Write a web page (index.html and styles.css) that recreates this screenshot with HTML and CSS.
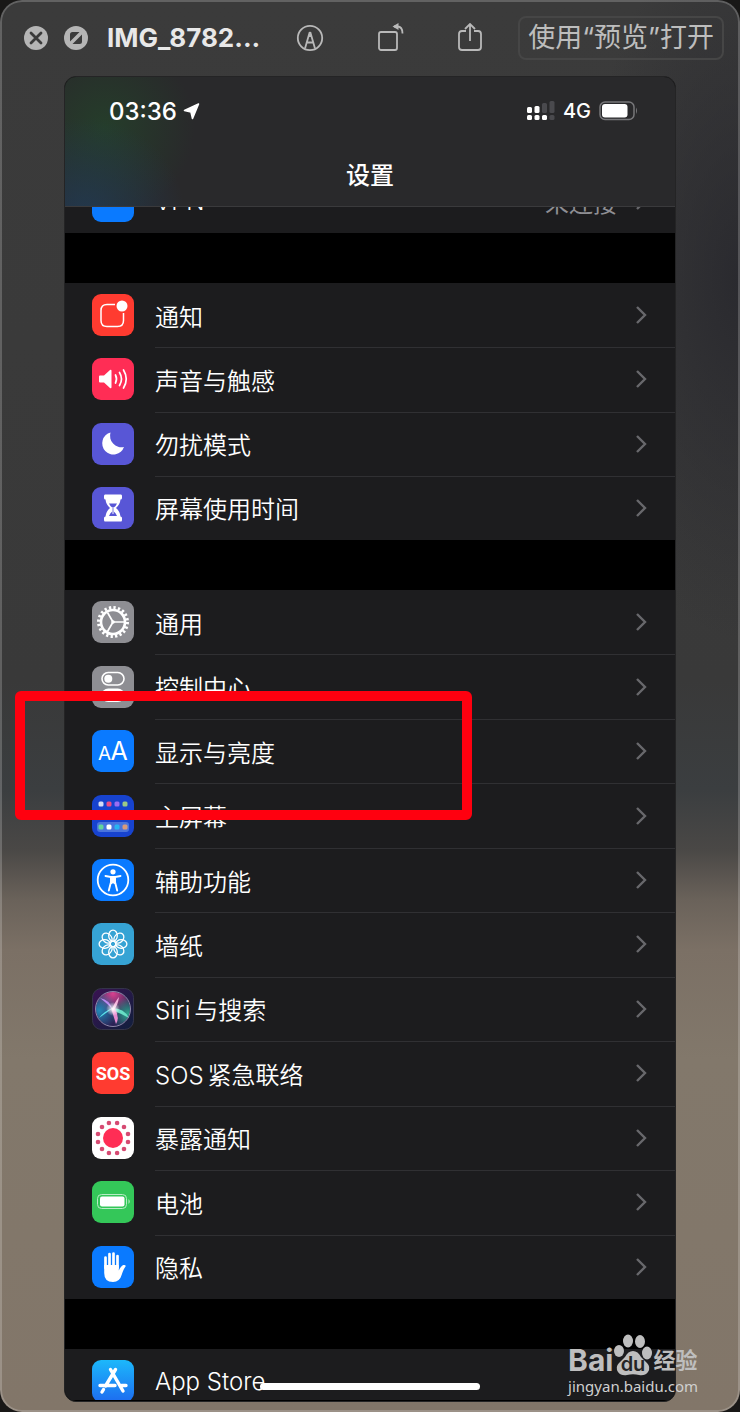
FILE: index.html
```
<!DOCTYPE html>
<html lang="zh-CN">
  <head>
    <meta charset="utf-8" />
    <title>IMG_8782</title>
    <link rel="stylesheet" href="styles.css" />
  </head>
  <body>
    <svg width="0" height="0" class="defs">
      <defs>
        <symbol id="chevron" viewBox="0 0 12 20">
          <path d="M2 2l8 8-8 8" fill="none" stroke="#68686c" stroke-width="2.4" />
        </symbol>
        <linearGradient id="storeBg" x1="0" y1="0" x2="0" y2="1">
          <stop offset="0" stop-color="#1cb8fb" />
          <stop offset="1" stop-color="#1d6cf0" />
        </linearGradient>
        <linearGradient id="siriBg" x1="0" y1="0" x2="1" y2="1">
          <stop offset="0" stop-color="#3a1252" />
          <stop offset="1" stop-color="#101f3c" />
        </linearGradient>
        <radialGradient id="siriPink" cx=".5" cy=".05" r=".6">
          <stop offset="0" stop-color="#d8418f" />
          <stop offset="1" stop-color="#d8418f" stop-opacity="0" />
        </radialGradient>
        <radialGradient id="siriTeal" cx=".1" cy=".55" r=".55">
          <stop offset="0" stop-color="#2389b8" />
          <stop offset="1" stop-color="#2389b8" stop-opacity="0" />
        </radialGradient>
        <radialGradient id="siriGreen" cx=".95" cy=".65" r=".5">
          <stop offset="0" stop-color="#2ca78d" />
          <stop offset="1" stop-color="#2ca78d" stop-opacity="0" />
        </radialGradient>
        <radialGradient id="siriGlow">
          <stop offset="0" stop-color="#fff" />
          <stop offset="1" stop-color="#fff" stop-opacity="0" />
        </radialGradient>
      </defs>
    </svg>

    <div class="window">
      <div class="titlebar">
        <button class="round-btn" aria-label="关闭">
          <svg width="24" height="24" viewBox="0 0 24 24">
            <circle cx="12" cy="12" r="12" fill="#b5b5b5" />
            <path d="M7 7l10 10M17 7L7 17" stroke="#3b3b3b" stroke-width="2.8" stroke-linecap="round" />
          </svg>
        </button>
        <button class="round-btn" aria-label="全屏">
          <svg width="24" height="24" viewBox="0 0 24 24">
            <circle cx="12" cy="12" r="12" fill="#b5b5b5" />
            <path d="M6 15.5V8.500Q6 6 8.500 6H15.500zM18 8.500V15.500Q18 18 15.500 18H8.500z" fill="#3b3b3b" />
          </svg>
        </button>
        <h1 class="filename">IMG_8782...</h1>
        <div class="tools">
          <button class="tool" aria-label="标记">
            <svg width="28" height="28" viewBox="0 0 28 28" fill="none" stroke="#b9b9b9" stroke-width="1.8">
              <circle cx="14" cy="14" r="12.200" />
              <path d="M9 24.500L13.500 9h1L19 24.500M10.700 18.500h6.600" />
              <path d="M12 13l2-6 2 6z" fill="#b9b9b9" stroke="none" />
            </svg>
          </button>
          <button class="tool" aria-label="旋转">
            <svg width="28" height="30" viewBox="0 0 28 30" fill="none" stroke="#b9b9b9" stroke-width="1.800">
              <rect x="2" y="9" width="18" height="18" rx="2" />
              <path d="M17 3.500h3.500q5 0 5 7" />
              <path d="M21.500 0v7l-6-3.500z" fill="#b9b9b9" stroke="none" />
            </svg>
          </button>
          <button class="tool" aria-label="共享">
            <svg width="26" height="30" viewBox="0 0 26 30" fill="none" stroke="#b9b9b9" stroke-width="1.800">
              <path d="M9 8H5Q2 8 2 11v13q0 3 3 3h16q3 0 3-3V11q0-3-3-3h-4M13 18V1M8 6l5-5 5 5" />
            </svg>
          </button>
        </div>
        <button class="open-btn">使用“预览”打开</button>
      </div>

      <div class="phone">
        <div class="header">
          <div class="status">
            <span class="time">03:36</span>
            <svg width="17" height="17" viewBox="0 0 17 17"><path d="M15.500 1L1.500 7.500 8 9 9.500 15.500z" fill="#fff" stroke="#fff" stroke-width="1.600" stroke-linejoin="round" /></svg>
            <svg class="signal" width="28" height="20" viewBox="0 0 28 20">
              <g fill="#fff">
                <rect x="0" y="6" width="5" height="6" rx="1.500" />
                <rect x="7.500" y="5" width="5" height="7" rx="1.500" />
                <rect x="0" y="14" width="5" height="5" rx="1.500" />
                <rect x="7.500" y="14" width="5" height="5" rx="1.500" />
                <rect x="15" y="14" width="5" height="5" rx="1.500" />
              </g>
              <g fill="#4a4a4e">
                <rect x="15" y="2" width="5" height="10" rx="1.500" />
                <rect x="22.500" y="0" width="5" height="12" rx="1.500" />
                <rect x="22.500" y="14" width="5" height="5" rx="1.500" />
              </g>
            </svg>
            <span class="network">4G</span>
            <svg width="40" height="20" viewBox="0 0 40 20">
              <rect x="1" y="1" width="34" height="17.500" rx="5" fill="none" stroke="#77777a" stroke-width="1.500" />
              <rect x="3" y="3" width="25.500" height="13.500" rx="3" fill="#fff" />
              <path d="M37 6.500q2 3.200 0 6.500z" fill="#77777a" />
            </svg>
          </div>
          <h2 class="title">设置</h2>
        </div>

        <ul class="group group-top">
          <li class="row">
            <svg class="icon" viewBox="0 0 42 42"><rect width="42" height="42" rx="9" fill="#0a7aff" /></svg>
            <span class="label">VPN</span>
            <span class="value">未连接</span>
            <svg class="chevron"><use href="#chevron" /></svg>
          </li>
        </ul>

        <ul class="group group-alerts">
          <li class="row">
            <svg class="icon" viewBox="0 0 42 42">
              <rect width="42" height="42" rx="9" fill="#ff3b30" />
              <path d="M23 10.500H15Q9 10.500 9 16.500V26.500Q9 32.500 15 32.500H25.500Q31.500 32.500 31.500 26.500V19" fill="none" stroke="#fff" stroke-width="1.500" />
              <circle cx="30" cy="12" r="5.500" fill="#fff" />
            </svg>
            <span class="label">通知</span>
            <svg class="chevron"><use href="#chevron" /></svg>
          </li>
          <li class="row">
            <svg class="icon" viewBox="0 0 42 42">
              <rect width="42" height="42" rx="9" fill="#ff2d55" />
              <path d="M8 17.500h4l6-5.500q1.500-1 1.500 1v16q0 2-1.500 1l-6-5.500H8q-1 0-1-1v-5q0-1 1-1z" fill="#fff" />
              <path d="M23.500 17q2 4 0 8M27.500 14.500q4 6.500 0 13M31.500 12q5.500 9 0 18" fill="none" stroke="#fff" stroke-width="1.700" stroke-linecap="round" />
            </svg>
            <span class="label">声音与触感</span>
            <svg class="chevron"><use href="#chevron" /></svg>
          </li>
          <li class="row">
            <svg class="icon" viewBox="0 0 42 42">
              <rect width="42" height="42" rx="9" fill="#5856d6" />
              <path d="M18.500 9.500A11.200 11.200 0 1 0 32 24A11.500 11.500 0 0 1 18.500 9.500z" fill="#fff" />
            </svg>
            <span class="label">勿扰模式</span>
            <svg class="chevron"><use href="#chevron" /></svg>
          </li>
          <li class="row">
            <svg class="icon" viewBox="0 0 42 42">
              <rect width="42" height="42" rx="9" fill="#5856d6" />
              <path d="M13 7.500h16q1 0 1 1.500v2q0 1.500-1.500 1.500-.5 5-4.500 8.500 4 3.500 4.500 8.500Q30 29.500 30 31v2q0 1.500-1 1.500H13q-1 0-1-1.500v-2q0-1.500 1.500-1.500.5-5 4.500-8.500-4-3.500-4.500-8.500Q12 12.500 12 11V9q0-1.500 1-1.500z" fill="#fff" />
              <path d="M17 16.500h8q-1 2.500-3.200 4v4q2.200 1.500 3.200 4.500h-8q1-3 3.200-4.500v-4q-2.200-1.500-3.200-4z" fill="#5856d6" />
              <path d="M21 20v7" stroke="#fff" />
            </svg>
            <span class="label">屏幕使用时间</span>
            <svg class="chevron"><use href="#chevron" /></svg>
          </li>
        </ul>

        <ul class="group group-system">
          <li class="row">
            <svg class="icon" viewBox="0 0 42 42">
              <rect width="42" height="42" rx="9" fill="#8e8e93" />
              <g fill="none" stroke="#fff">
                <circle cx="21" cy="21" r="14.500" stroke-width="3" stroke-dasharray="2.300 2.255" />
                <circle cx="21" cy="21" r="12" stroke-width="2.600" />
                <path d="M21 21h11M21 21l-5.500-9.500M21 21l-5.500 9.500" stroke-width="1.700" />
              </g>
              <circle cx="21" cy="21" r="1.800" fill="#fff" />
            </svg>
            <span class="label">通用</span>
            <svg class="chevron"><use href="#chevron" /></svg>
          </li>
          <li class="row">
            <svg class="icon" viewBox="0 0 42 42">
              <rect width="42" height="42" rx="9" fill="#8e8e93" />
              <rect x="10" y="6.500" width="22" height="12.500" rx="6.200" fill="none" stroke="#fff" stroke-width="1.600" />
              <circle cx="16.300" cy="12.800" r="4" fill="#fff" />
              <rect x="9.500" y="22.500" width="23" height="13.500" rx="6.700" fill="#fff" />
              <circle cx="26" cy="29.200" r="4" fill="#8e8e93" />
            </svg>
            <span class="label">控制中心</span>
            <svg class="chevron"><use href="#chevron" /></svg>
          </li>
          <li class="row">
            <svg class="icon" viewBox="0 0 42 42">
              <rect width="42" height="42" rx="9" fill="#0a7aff" />
              <text x="6" y="29.500" class="glyph" font-size="19">A</text>
              <text x="18.500" y="29.500" class="glyph" font-size="25">A</text>
            </svg>
            <span class="label">显示与亮度</span>
            <svg class="chevron"><use href="#chevron" /></svg>
          </li>
          <li class="row">
            <svg class="icon" viewBox="0 0 42 42">
              <rect width="42" height="42" rx="9" fill="#1743cf" />
              <rect x="5" y="27" width="32" height="10" rx="3" fill="#4a74dc" />
              <rect x="6.500" y="6.500" width="5" height="5" rx="1.500" fill="#d3dcf5" />
              <rect x="14.500" y="6.500" width="5" height="5" rx="1.500" fill="#ee4c84" />
              <rect x="22.500" y="6.500" width="5" height="5" rx="1.500" fill="#9a6df2" />
              <rect x="30.500" y="6.500" width="5" height="5" rx="1.500" fill="#9bc987" />
              <rect x="6.500" y="29.500" width="5" height="5" rx="1.500" fill="#63d69b" />
              <rect x="14.500" y="29.500" width="5" height="5" rx="1.500" fill="#fff" />
              <rect x="22.500" y="29.500" width="5" height="5" rx="1.500" fill="#27b4f2" />
              <rect x="30.500" y="29.500" width="5" height="5" rx="1.500" fill="#d99b7c" />
            </svg>
            <span class="label">主屏幕</span>
            <svg class="chevron"><use href="#chevron" /></svg>
          </li>
          <li class="row">
            <svg class="icon" viewBox="0 0 42 42">
              <rect width="42" height="42" rx="9" fill="#0a7aff" />
              <circle cx="21" cy="21" r="15.300" fill="none" stroke="#fff" stroke-width="1.800" />
              <circle cx="21" cy="12.800" r="2.600" fill="#fff" />
              <path d="M13.500 17l5.500 1v5l-2.200 8.500M28.500 17L23 18v5l2.200 8.500" fill="none" stroke="#fff" stroke-width="1.900" stroke-linecap="round" />
              <path d="M18.500 17h5v8h-1.500l-1-1-1 1h-1.500z" fill="#fff" />
            </svg>
            <span class="label">辅助功能</span>
            <svg class="chevron"><use href="#chevron" /></svg>
          </li>
          <li class="row">
            <svg class="icon" viewBox="0 0 42 42">
              <rect width="42" height="42" rx="9" fill="#36a3d4" />
              <g fill="none" stroke="#fff" stroke-width="1.300">
                <circle cx="21" cy="21" r="2.800" />
                <ellipse id="petal" cx="21" cy="12.700" rx="4.300" ry="5.600" />
                <use href="#petal" transform="rotate(45 21 21)" />
                <use href="#petal" transform="rotate(90 21 21)" />
                <use href="#petal" transform="rotate(135 21 21)" />
                <use href="#petal" transform="rotate(180 21 21)" />
                <use href="#petal" transform="rotate(225 21 21)" />
                <use href="#petal" transform="rotate(270 21 21)" />
                <use href="#petal" transform="rotate(315 21 21)" />
              </g>
            </svg>
            <span class="label">墙纸</span>
            <svg class="chevron"><use href="#chevron" /></svg>
          </li>
          <li class="row">
            <svg class="icon" viewBox="0 0 42 42">
              <rect x=".5" y=".5" width="41" height="41" rx="9" fill="url(#siriBg)" stroke="#34344a" />
              <circle cx="21" cy="21" r="17" fill="#2b2155" />
              <circle cx="21" cy="21" r="17" fill="url(#siriPink)" />
              <circle cx="21" cy="21" r="17" fill="url(#siriTeal)" />
              <circle cx="21" cy="21" r="17" fill="url(#siriGreen)" />
              <path d="M21 20L7 30q5-7 14-10z" fill="#5be3ea" />
              <path d="M20 20q12 0 17 10-7-4-17-8z" fill="#67dfc5" />
              <path d="M19 20l5 16q4-5-1-16z" fill="#e78ad0" />
              <path d="M20 21q-2-9-12-11 9 7 12 11z" fill="#b98af0" />
              <path d="M20 21q4-9 7-12-1 8-5 13z" fill="#f4b4dc" />
              <circle cx="21" cy="21" r="7" fill="url(#siriGlow)" />
              <circle cx="21" cy="21" r="17.500" fill="none" stroke="#a9a3c4" stroke-width=".8" />
            </svg>
            <span class="label"><span class="latin">Siri</span>与搜索</span>
            <svg class="chevron"><use href="#chevron" /></svg>
          </li>
          <li class="row">
            <svg class="icon" viewBox="0 0 42 42">
              <rect width="42" height="42" rx="9" fill="#ff3b30" />
              <text x="21" y="28" class="sos" text-anchor="middle">SOS</text>
            </svg>
            <span class="label"><span class="latin">SOS</span>紧急联络</span>
            <svg class="chevron"><use href="#chevron" /></svg>
          </li>
          <li class="row">
            <svg class="icon" viewBox="0 0 42 42">
              <rect width="42" height="42" rx="9" fill="#fff" />
              <circle cx="21" cy="21" r="10" fill="#ff2d55" />
              <g fill="#d64a72">
                <circle cx="25.100" cy="6" r="2.300" />
                <circle cx="32" cy="10" r="2.300" />
                <circle cx="36" cy="17" r="2.300" />
                <circle cx="36" cy="25" r="2.300" />
                <circle cx="32" cy="32" r="2.300" />
                <circle cx="25.100" cy="36" r="2.300" />
                <circle cx="16.900" cy="36" r="2.300" />
                <circle cx="10" cy="32" r="2.300" />
                <circle cx="6" cy="25" r="2.300" />
                <circle cx="6" cy="17" r="2.300" />
                <circle cx="10" cy="10" r="2.300" />
                <circle cx="16.900" cy="6" r="2.300" />
              </g>
            </svg>
            <span class="label">暴露通知</span>
            <svg class="chevron"><use href="#chevron" /></svg>
          </li>
          <li class="row">
            <svg class="icon" viewBox="0 0 42 42">
              <rect width="42" height="42" rx="9" fill="#34c759" />
              <rect x="5.500" y="13.500" width="29" height="14" rx="4" fill="none" stroke="#b8ecc6" />
              <rect x="8" y="15.500" width="24.500" height="10" rx="2" fill="#fff" />
              <path d="M36.500 18q2.500 2.500 0 5z" fill="#b8ecc6" />
            </svg>
            <span class="label">电池</span>
            <svg class="chevron"><use href="#chevron" /></svg>
          </li>
          <li class="row">
            <svg class="icon" viewBox="0 0 42 42">
              <rect width="42" height="42" rx="9" fill="#0a7aff" />
              <path d="M13.500 22V11.500M17.500 20V8M21.500 20V7.500M25.500 22V10" stroke="#fff" stroke-width="2.700" stroke-linecap="round" />
              <path d="M12.200 19h14.600v5.500q2-4.500 4.500-5.500 2-.5 2.500 1-2.500 3.500-4 8.500-2 7.500-8.800 7.500-8.800 0-8.800-9z" fill="#fff" />
            </svg>
            <span class="label">隐私</span>
            <svg class="chevron"><use href="#chevron" /></svg>
          </li>
        </ul>

        <ul class="group group-bottom">
          <li class="row">
            <svg class="icon" viewBox="0 0 42 42">
              <rect width="42" height="42" rx="9" fill="url(#storeBg)" />
              <path d="M18.500 9.500l12.500 21.500M23.500 9.500L13.500 26M11.500 29.500l-1.500 2.500M8 25.500h15M29.500 25.500H34" stroke="#fff" stroke-width="3.400" stroke-linecap="round" />
            </svg>
            <span class="label">App Store</span>
          </li>
        </ul>
        <div class="home-bar"></div>
      </div>

      <div class="mark"></div>

      <div class="watermark">
        <div class="brand">
          <span>Bai</span>
          <svg width="40" height="42" viewBox="0 0 40 42" fill="#bebebe">
            <ellipse cx="6" cy="17" rx="5" ry="6" />
            <ellipse cx="15" cy="7" rx="5" ry="6.500" />
            <ellipse cx="27" cy="7.500" rx="5" ry="6.500" />
            <ellipse cx="34" cy="19" rx="5" ry="6.500" />
            <path d="M20 17q5 0 8 6l6 6q4 4 1 9-3 4-9 3-6-1.500-12 0-6 1-9-3-3-5 1-9l6-6q3-6 8-6z" />
            <text x="20" y="37" text-anchor="middle" class="du">du</text>
          </svg>
          <span class="brand-cn">经验</span>
        </div>
        <div class="site">jingyan.baidu.com</div>
      </div>
    </div>
  </body>
</html>
```

FILE: styles.css
```
* {
  box-sizing: border-box;
}
body {
  margin: 0;
  background: #191817;
  color: #fff;
  font-family: Inter, "Noto Sans CJK SC", sans-serif;
}
button {
  padding: 0;
  border: 0;
  background: none;
  font-family: inherit;
}
h1,
h2,
ul {
  margin: 0;
  padding: 0;
}
svg {
  display: block;
  flex: none;
}
.defs {
  position: absolute;
}

/* preview window */
.window {
  position: relative;
  display: flex;
  flex-direction: column;
  min-height: 100vh;
  padding: 0 64px 10px;
  border-radius: 22px;
  background:
    radial-gradient(ellipse 160px 360px at 100% 280px, rgba(38, 38, 44, 0.8), transparent),
    linear-gradient(#3b3b3b 0, #393939 680px, #3b3e40 790px, #4a4846 850px, #6a625a 900px, #7b7065 950px, #82786b 1060px, #827669 1412px);
  box-shadow: inset 0 0 0 2px rgba(255, 255, 255, 0.2);
}
.titlebar {
  display: flex;
  align-items: center;
  height: 76px;
  margin: 0 -48px 0 -40px;
}
.round-btn {
  margin-right: 16px;
}
.filename {
  margin-right: 36px;
  margin-left: 3px;
  color: #e8e8e8;
  font-size: 26px;
  font-weight: 700;
  line-height: 28px;
}
.tools {
  display: flex;
  flex: 1;
  align-items: center;
  justify-content: space-between;
  margin-right: 35px;
}
.open-btn {
  height: 44px;
  padding: 0 8px;
  border: 2px solid #464646;
  border-radius: 8px;
  color: #bdbdbd;
  font-size: 27px;
  line-height: 36px;
}

/* phone screen */
.phone {
  position: relative;
  display: flex;
  flex: 1;
  flex-direction: column;
  border: 1px solid #242425;
  border-radius: 12px;
  background: #000;
  overflow: hidden;
}
.header {
  height: 130px;
  border-bottom: 1px solid #3a3a3c;
  background:
    radial-gradient(circle at 20px 140px, rgba(32, 62, 92, 0.7), transparent 100px),
    radial-gradient(circle at 40px 50px, rgba(36, 66, 42, 0.8), transparent 90px),
    #29292b;
}
.status {
  display: flex;
  align-items: center;
  height: 68px;
  padding: 0 36px 0 44px;
}
.time {
  margin-right: 6px;
  font-size: 24px;
  font-weight: 500;
}
.signal {
  margin-left: auto;
}
.network {
  margin: 0 8px;
  font-size: 20px;
  font-weight: 500;
}
.title {
  font-size: 24px;
  font-weight: 500;
  line-height: 62px;
  text-align: center;
}
.group {
  display: grid;
  grid-auto-rows: 1fr;
  margin-bottom: 50px;
  background: #1c1c1e;
  list-style: none;
}
.row {
  display: flex;
  position: relative;
  align-items: center;
  min-height: 64px;
  padding: 0 28px 0 27px;
}
.row + .row::before {
  position: absolute;
  top: 0;
  right: 0;
  left: 90px;
  border-top: 1px solid #303033;
  content: "";
}
.icon {
  width: 42px;
  height: 42px;
  margin-right: 21px;
}
.label {
  flex: 1;
  font-size: 24px;
  font-weight: 350;
}
.latin {
  margin-right: 4px;
}
.value {
  margin-right: 18px;
  color: #8e8e93;
  font-size: 24px;
}
.chevron {
  width: 12px;
  height: 20px;
}
.group-top {
  align-content: end;
  height: 26px;
  overflow: hidden;
}
.group-alerts {
  min-height: 257px;
}
.group-system {
  min-height: 709px;
}
.group-bottom {
  height: 51px;
  margin-bottom: 0;
  overflow: hidden;
}
.home-bar {
  position: absolute;
  bottom: 11px;
  left: 50%;
  width: 220px;
  height: 7px;
  margin-left: -110px;
  border-radius: 4px;
  background: #fff;
}
.glyph {
  fill: #fff;
}
.sos {
  fill: #fff;
  font-family: Roboto, sans-serif;
  font-size: 18px;
  font-weight: 700;
}

/* highlight frame */
.mark {
  position: absolute;
  top: 691px;
  left: 15px;
  width: 457px;
  height: 129px;
  border: 10px solid #ff000f;
  border-radius: 6px;
}

.watermark {
  position: absolute;
  right: 42px;
  bottom: 16px;
  color: #bebebe;
}
.brand {
  display: flex;
  align-items: flex-end;
  font-size: 30px;
  font-weight: 700;
  line-height: 32px;
}
.brand-cn {
  font-size: 22px;
}
.du {
  fill: #242425;
  font-size: 20px;
  font-weight: 600;
}
.site {
  color: #d0d0d0;
  font-family: "Noto Sans", sans-serif;
  font-size: 15px;
  line-height: 20px;
}
```
